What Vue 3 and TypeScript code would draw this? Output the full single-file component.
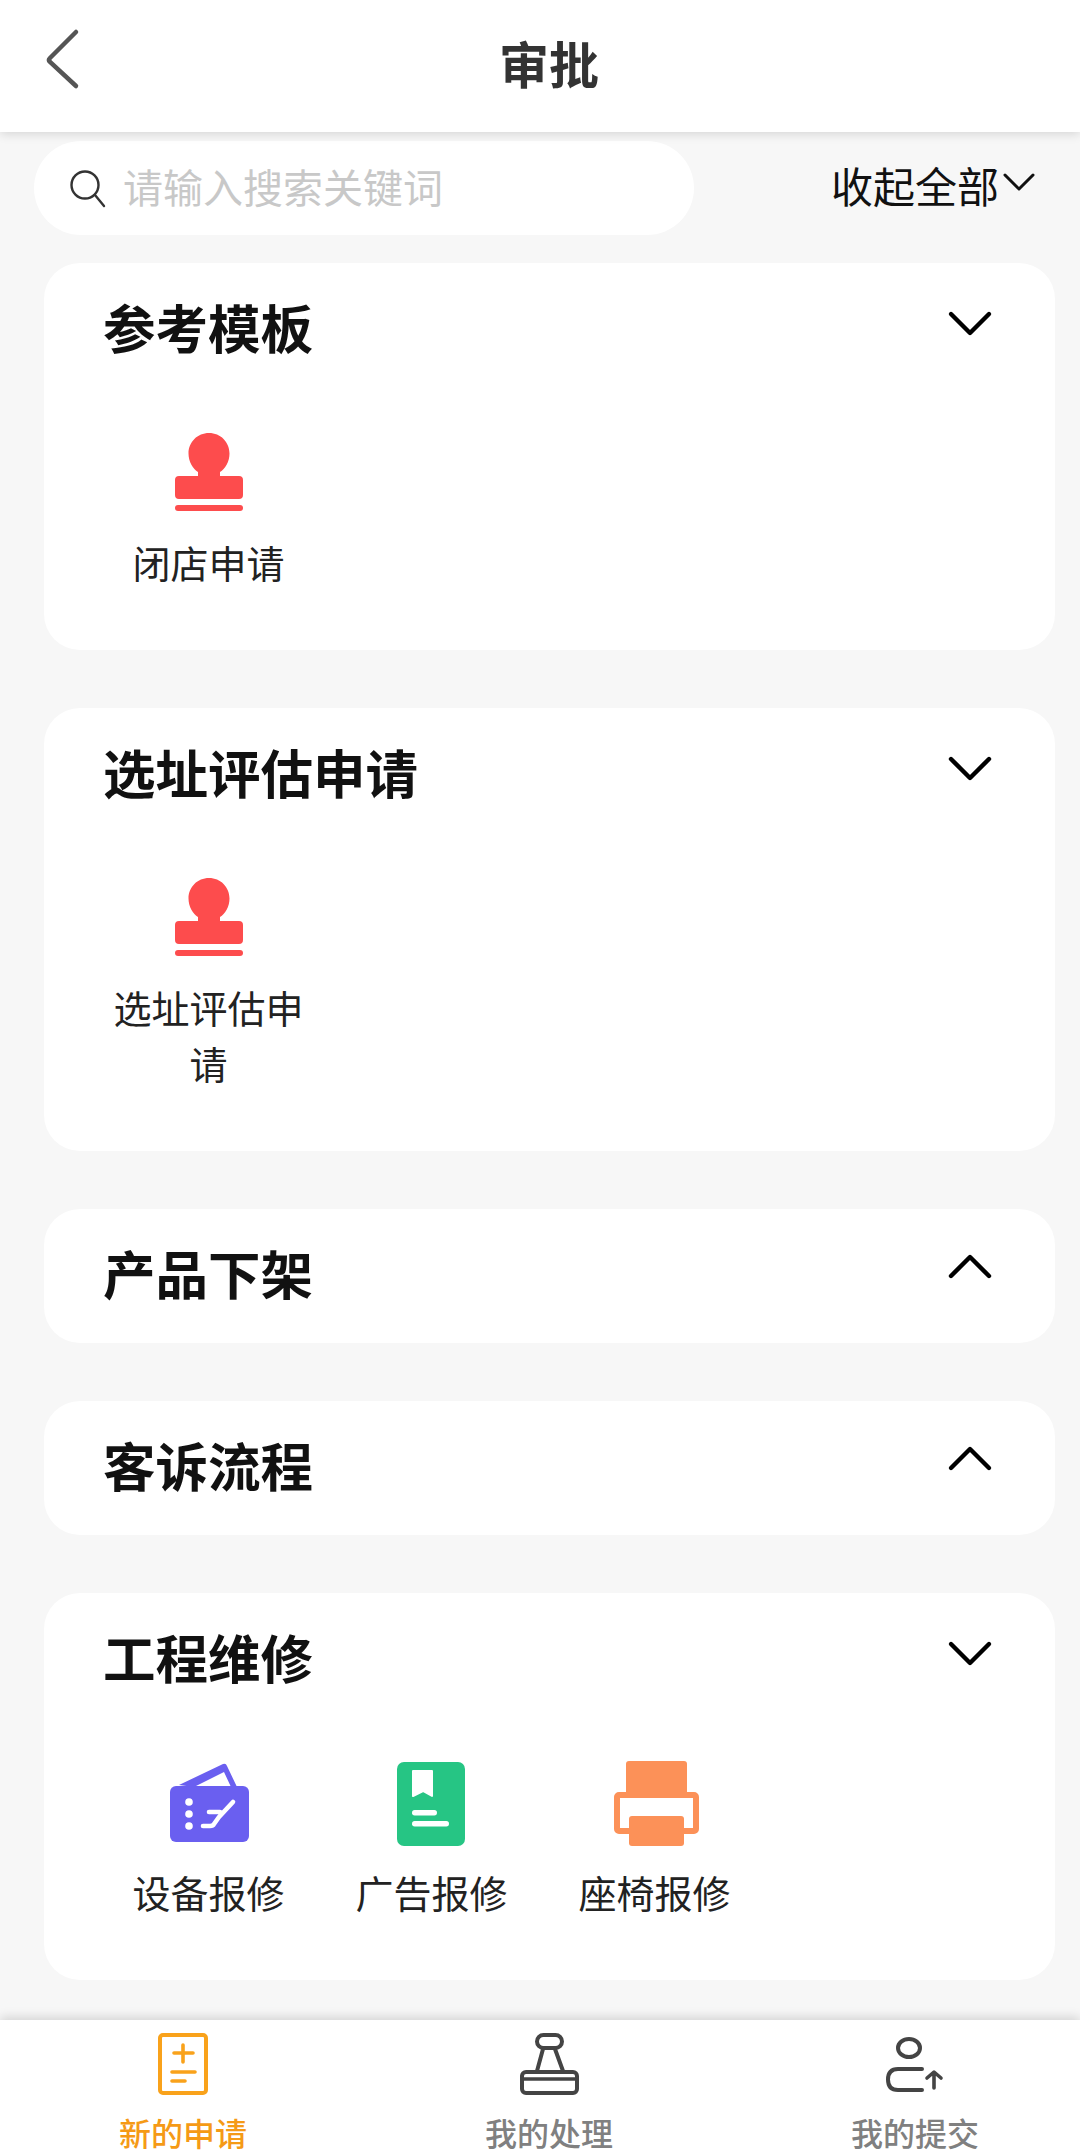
<template>
  <div class="page">
    <header class="nav">
      <svg class="back" width="40" height="64" viewBox="0 0 40 64">
        <path d="M34 4 L8 30 Q6 32 8 34 L34 58" fill="none" stroke="#555" stroke-width="4.5" stroke-linecap="round" />
      </svg>
      <h1 class="nav-title">审批</h1>
    </header>

    <div class="tools">
      <div class="search">
        <svg width="40" height="40" viewBox="0 0 40 40">
          <circle cx="17" cy="17" r="13.5" fill="none" stroke="#333" stroke-width="2.4" />
          <path d="M27 27 L36 38" fill="none" stroke="#333" stroke-width="2.4" stroke-linecap="round" />
        </svg>
        <span class="placeholder">请输入搜索关键词</span>
      </div>
      <div class="collapse-all">
        <span>收起全部</span>
        <svg width="32" height="20" viewBox="0 0 32 20">
          <path d="M2 3 L16 17 L30 3" fill="none" stroke="#111" stroke-width="3" stroke-linecap="round" stroke-linejoin="round" />
        </svg>
      </div>
    </div>

    <section v-for="group in groups" :key="group.title" class="card">
      <div class="card-head">
        <h2 class="card-title">{{ group.title }}</h2>
        <svg class="chevron" width="44" height="28" viewBox="0 0 44 28">
          <path :d="group.items.length ? 'M3 4 L22 23 L41 4' : 'M3 20 L22 1 L41 20'" fill="none" stroke="#000" stroke-width="4.4" stroke-linecap="round" stroke-linejoin="round" />
        </svg>
      </div>
      <div v-if="group.items.length" class="items">
        <div v-for="item in group.items" :key="item.label" class="item">
          <svg class="item-icon" width="88" height="88" viewBox="0 0 88 88">
            <template v-if="item.icon === 'stamp'">
              <path d="M44 2 C32.5 2 23.5 11 23.5 22.5 C23.5 31 28 38 33 41 L33 45 L14 45 Q10 45 10 49 L10 64 Q10 68 14 68 L74 68 Q78 68 78 64 L78 49 Q78 45 74 45 L55 45 L55 41 C60 38 64.5 31 64.5 22.5 C64.5 11 55.5 2 44 2 Z" fill="#fd4c4d" />
              <rect x="10" y="74" width="68" height="6" rx="3" fill="#fd4c4d" />
            </template>
            <template v-else-if="item.icon === 'card'">
              <path fill-rule="evenodd" d="M14 24 L58 3 Q61 2 62 5 L72 26 L66 26 L59 11 L29 26 Z" fill="#6a5ff0" />
              <rect x="5" y="25" width="79" height="56" rx="6" fill="#6a5ff0" />
              <circle cx="24" cy="41" r="3.8" fill="#fff" />
              <circle cx="24" cy="53" r="3.8" fill="#fff" />
              <circle cx="24" cy="65" r="3.8" fill="#fff" />
              <path d="M68 41 L54 56 L49 63 Q48 65 45 65 L38 65 M44 51 L55 51" fill="none" stroke="#fff" stroke-width="4.6" stroke-linecap="round" stroke-linejoin="round" />
            </template>
            <template v-else-if="item.icon === 'book'">
              <rect x="9" y="1" width="68" height="84" rx="7" fill="#26c584" />
              <path d="M25 10 L44 10 L44 35 L35 30 L25 35 Z" fill="#fff" stroke="#fff" stroke-width="2" stroke-linejoin="round" />
              <rect x="24" y="49" width="25" height="5.5" rx="2.7" fill="#fff" />
              <rect x="24" y="60" width="37" height="5.5" rx="2.7" fill="#fff" />
            </template>
            <template v-else>
              <rect x="15" y="0" width="61" height="34" rx="3" fill="#fc9158" />
              <rect x="6" y="34" width="79" height="36" rx="2" fill="none" stroke="#fc9158" stroke-width="6" />
              <rect x="18" y="55" width="55" height="30" rx="3" fill="#fc9158" />
            </template>
          </svg>
          <span class="item-label">{{ item.label }}</span>
        </div>
      </div>
    </section>

    <nav class="tabbar">
      <div class="tab active">
        <svg width="56" height="66" viewBox="0 0 56 66">
          <rect x="5" y="4" width="46" height="58" rx="3" fill="none" stroke="#f9a21b" stroke-width="4" />
          <path d="M28 14 V31 M19 22 H38 M17 41 H40 M17 50 H30" fill="none" stroke="#f9a21b" stroke-width="3.6" stroke-linecap="round" />
        </svg>
        <span>新的申请</span>
      </div>
      <div class="tab">
        <svg width="64" height="66" viewBox="0 0 64 66">
          <rect x="20" y="4" width="25" height="13" rx="6.5" fill="none" stroke="#444" stroke-width="4" />
          <path d="M26 18 L20 40 M38 18 L46 40" fill="none" stroke="#444" stroke-width="4" />
          <rect x="5" y="41" width="55" height="21" rx="4" fill="none" stroke="#444" stroke-width="4" />
          <path d="M5 48 H60" fill="none" stroke="#444" stroke-width="3.4" />
        </svg>
        <span>我的处理</span>
      </div>
      <div class="tab">
        <svg width="64" height="66" viewBox="0 0 64 66">
          <ellipse cx="26" cy="17" rx="11" ry="9" fill="none" stroke="#444" stroke-width="4" />
          <path d="M39 38 H15 Q5 38 5 48.5 Q5 59 15 59 H39" fill="none" stroke="#444" stroke-width="4" stroke-linecap="round" />
          <path d="M51 57 V42 M44 47 L51 41 L58 47" fill="none" stroke="#444" stroke-width="3.6" stroke-linecap="round" stroke-linejoin="round" />
        </svg>
        <span>我的提交</span>
      </div>
    </nav>
  </div>
</template>

<script setup lang="ts">
type IconName = 'stamp' | 'card' | 'book' | 'printer';

interface Item {
  label: string;
  icon: IconName;
}

interface Group {
  title: string;
  items: Item[];
}

const groups: Group[] = [
  { title: '参考模板', items: [{ label: '闭店申请', icon: 'stamp' }] },
  { title: '选址评估申请', items: [{ label: '选址评估申请', icon: 'stamp' }] },
  { title: '产品下架', items: [] },
  { title: '客诉流程', items: [] },
  {
    title: '工程维修',
    items: [
      { label: '设备报修', icon: 'card' },
      { label: '广告报修', icon: 'book' },
      { label: '座椅报修', icon: 'printer' },
    ],
  },
];
</script>

<style>
html,
body {
  margin: 0;
  background: #f7f7f7;
}
</style>

<style scoped>
.page {
  width: 1080px;
  height: 2154px;
  background: #f7f7f7;
  font-family: "Noto Sans CJK SC", "Noto Sans", sans-serif;
  color: #111;
  display: flex;
  flex-direction: column;
  overflow: hidden;
  position: relative;
}

.nav {
  height: 132px;
  flex: none;
  background: #fff;
  box-shadow: 0 2px 10px rgba(0, 0, 0, 0.14);
  display: flex;
  align-items: center;
  justify-content: center;
  position: relative;
}

.back {
  position: absolute;
  left: 42px;
  top: 28px;
}

.nav-title {
  margin: 0 0 8px 18px;
  font-size: 50px;
  font-weight: 700;
  color: #333;
}

.tools {
  display: flex;
  align-items: center;
  justify-content: space-between;
  margin: 9px 0 28px 34px;
  padding-right: 45px;
}

.search {
  width: 660px;
  height: 94px;
  border-radius: 47px;
  background: #fff;
  display: flex;
  align-items: center;
  gap: 15px;
  padding-left: 34px;
  box-sizing: border-box;
}

.placeholder {
  font-size: 40px;
  color: #c8c8c8;
  margin-bottom: 5px;
}

.collapse-all {
  display: flex;
  align-items: center;
  gap: 4px;
  font-size: 42px;
  margin-top: -8px;
}

.collapse-all svg {
  margin-top: -4px;
}

.card {
  width: 1011px;
  margin: 0 0 58px 44px;
  background: #fff;
  border-radius: 36px;
  padding: 0 59px;
  box-sizing: border-box;
  flex: none;
}

.card-head {
  height: 134px;
  display: flex;
  align-items: center;
  justify-content: space-between;
}

.card-title {
  margin: 0 0 8px;
  font-size: 52.5px;
  font-weight: 700;
  color: #111;
}

.chevron {
  overflow: visible;
  margin-right: 4px;
  margin-top: -12px;
}

.items {
  display: flex;
  margin-left: -6px;
  padding-top: 34px;
  padding-bottom: 60px;
}

.item {
  width: 223px;
  display: flex;
  flex-direction: column;
  align-items: center;
  text-align: center;
  padding: 0 15px;
  box-sizing: border-box;
}

.item-icon {
  overflow: visible;
  margin-bottom: 15px;
}

.item-label {
  font-size: 38px;
  line-height: 56px;
  color: #222;
}

.tabbar {
  position: absolute;
  left: 0;
  right: 0;
  bottom: 0;
  height: 134px;
  background: #fff;
  box-shadow: 0 -3px 10px rgba(0, 0, 0, 0.14);
  display: flex;
  padding-top: 11px;
  box-sizing: border-box;
}

.tab {
  width: 366px;
  flex: none;
  display: flex;
  flex-direction: column;
  align-items: center;
  gap: 13px;
  font-size: 32px;
  line-height: 44px;
  font-weight: 500;
  color: #808080;
}

.tab.active {
  color: #f59a16;
}
</style>
